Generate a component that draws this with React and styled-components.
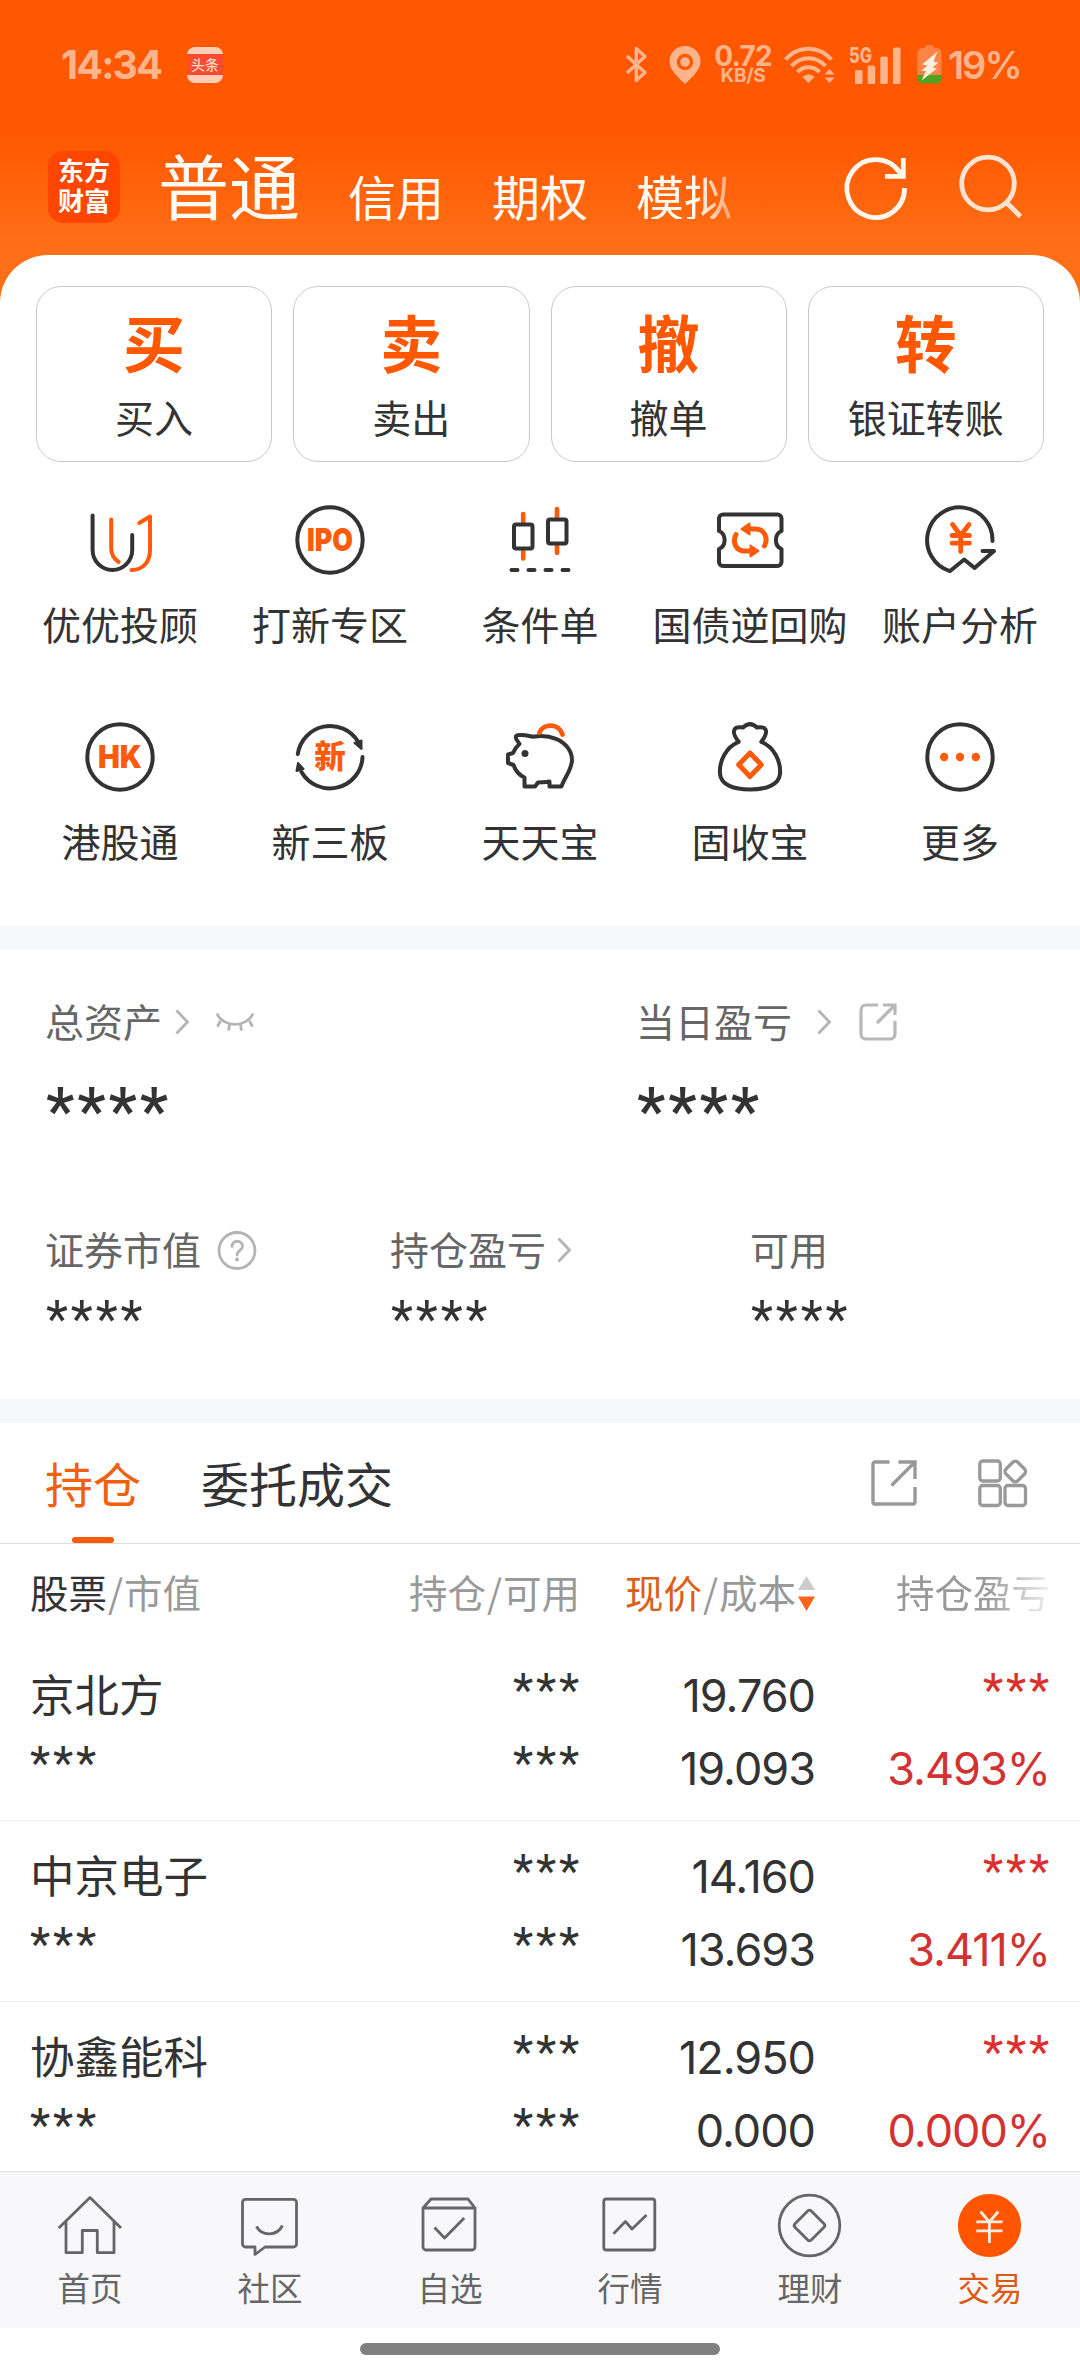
import React from 'react';
import styled, { createGlobalStyle } from 'styled-components';

const CJK = '"Noto Sans CJK SC", "Noto Sans", sans-serif';
const NUM = 'Inter, "Noto Sans CJK SC", sans-serif';
const STAR = 'Roboto, "Noto Sans CJK SC", sans-serif';
const ORANGE = '#ff5a0a';
const INK = '#333';

const GlobalStyle = createGlobalStyle`
  * { box-sizing: border-box; }
  body { margin: 0; background: #fff; }
  svg { display: block; flex: none; overflow: visible; }
`;

const Screen = styled.div`
  width: 1080px;
  height: 2376px;
  overflow: hidden;
  display: flex;
  flex-direction: column;
  font-family: ${CJK};
  color: ${INK};
  white-space: nowrap;
  background: linear-gradient(#ff5800 0, #ff5800 135px, #ff6f17 250px, #ff6f17 100%);
`;

/* ---------- status bar ---------- */

const StatusBar = styled.header`
  height: 129px;
  display: flex;
  align-items: center;
  padding: 0 60px 0 61px;
  color: #ffb48c;
  font-family: ${NUM};
  font-weight: 700;
`;

const Clock = styled.span`
  width: 126px;
  font-size: 39.5px;
  line-height: 44px;
  letter-spacing: -1.8px;
`;

const NewsBadge = styled.span`
  width: 36px;
  height: 36px;
  border-radius: 8px;
  background: linear-gradient(#ffcdb4 0 7px, #f94b30 7px 28px, #ffcdb4 28px);
  color: #ffd9c8;
  font: 500 14px/35px ${CJK};
  text-align: center;
`;

const StatusIcons = styled.div`
  margin-left: auto;
  display: flex;
  align-items: center;
`;

const StatusSlot = styled.div`
  width: ${(p) => p.$w}px;
  margin-left: ${(p) => p.$gap || 0}px;
`;

const Speed = styled.div`
  display: flex;
  flex-direction: column;
  align-items: center;
  font-size: 28px;
  line-height: 21px;
  letter-spacing: -0.8px;
  small {
    font-size: 19px;
    line-height: 17px;
    letter-spacing: -0.3px;
  }
`;

const BatteryText = styled.span`
  display: block;
  font-size: 38px;
  font-weight: 600;
  line-height: 44px;
  letter-spacing: -2px;
`;

/* ---------- account header ---------- */

const AccountBar = styled.div`
  height: 126px;
  display: flex;
  align-items: center;
  padding: 0 58px 10px 48px;
`;

const Logo = styled.div`
  width: 72px;
  height: 72px;
  border-radius: 15px;
  background: #ff4600;
  color: #fff;
  padding: 4px 0 0;
  text-align: center;
  font-size: 26px;
  font-weight: 700;
  line-height: 30px;
`;

const AccountTabs = styled.nav`
  display: flex;
  align-items: flex-end;
  gap: 48px;
  padding: 0 0 8px;
  margin-left: 38px;
  color: #fffaf3;
`;

const AccountTab = styled.span`
  font-size: ${(p) => (p.$active ? 71 : 48)}px;
  line-height: ${(p) => (p.$active ? 72 : 48)}px;
  ${(p) => p.$fade && 'mask-image: linear-gradient(90deg, #000 64%, rgba(0,0,0,.4));'}
`;

const HeaderActions = styled.div`
  margin-left: auto;
  padding-bottom: 2px;
  display: flex;
  gap: 50px;
`;

/* ---------- main sheet ---------- */

const Sheet = styled.main`
  flex: 1;
  min-height: 0;
  overflow: hidden;
  background: #fff;
  border-radius: 48px 48px 0 0;
`;

const TradeCards = styled.div`
  display: grid;
  grid-template-columns: repeat(4, 1fr);
  gap: 21px;
  padding: 31px 36px 0;
`;

const TradeCard = styled.div`
  height: 176px;
  border: 1px solid #c9c9c9;
  border-radius: 25px;
  display: flex;
  flex-direction: column;
  align-items: center;
  padding-top: 23px;
  gap: 24px;
  b {
    font-size: 62px;
    line-height: 62px;
    font-weight: 700;
    color: #ff5800;
  }
`;

const Label = styled.span`
  font-size: 39px;
  line-height: 40px;
  color: ${(p) => p.$color || INK};
`;

const ToolGrid = styled.div`
  display: grid;
  grid-template-columns: repeat(5, 1fr);
  row-gap: 78px;
  padding: 42px 15px 66px;
`;

const Tool = styled.div`
  display: flex;
  flex-direction: column;
  align-items: center;
  gap: 27px;
`;

const Band = styled.div`
  height: 24px;
  background: #f7f8fa;
`;

const Assets = styled.section`
  height: 449px;
  padding: 50px 0 0 45px;
`;

const AssetRow = styled.div`
  display: grid;
  grid-template-columns: ${(p) => p.$cols};
  margin-top: ${(p) => p.$top || 0}px;
`;

const AssetTitle = styled.div`
  height: 40px;
  display: flex;
  align-items: center;
  gap: ${(p) => p.$gap || 0}px;
  svg { margin-top: 4px; }
`;

const Stars = styled.span`
  display: block;
  font-family: ${STAR};
  font-size: ${(p) => p.$size}px;
  line-height: ${(p) => p.$line}px;
  letter-spacing: ${(p) => p.$spacing}px;
  font-weight: ${(p) => p.$weight || 400};
  margin: ${(p) => p.$margin || 0};
  color: ${(p) => p.$color || INK};
`;

/* ---------- positions ---------- */

const TabBar = styled.div`
  height: 121px;
  border-bottom: 1px solid #dcdcdc;
  display: flex;
  padding: 0 53px 0 45px;
`;

const Tab = styled.div`
  display: flex;
  flex-direction: column;
  align-items: center;
  padding-top: 35px;
  margin-right: 60px;
  font-size: 48px;
  line-height: 48px;
  color: ${(p) => (p.$active ? '#f0600f' : INK)};
  &::after {
    content: '';
    width: 42px;
    height: 6px;
    margin-top: 31px;
    border-radius: 3px;
    background: ${(p) => (p.$active ? '#f25a0c' : 'transparent')};
  }
`;

const TabTools = styled.div`
  margin-left: auto;
  display: flex;
  align-items: center;
  gap: 61px;
`;

const columns = `
  display: grid;
  grid-template-columns: 320px 230px 235px 235px;
  padding: 0 30px;
`;

const TableHead = styled.div`
  ${columns}
  height: 96px;
  align-items: center;
  padding-bottom: 2px;
  font-size: 38.5px;
  line-height: 40px;
  color: #999;
`;

const HeadCell = styled.div`
  display: flex;
  justify-content: ${(p) => (p.$left ? 'flex-start' : 'flex-end')};
  align-items: center;
  em {
    font-style: normal;
    color: ${(p) => (p.$accent ? '#dc5f16' : INK)};
  }
  i {
    font-style: normal;
    width: 17px;
    text-align: center;
  }
  svg { margin: 4px 0 0 2px; }
  ${(p) => p.$fade && 'mask-image: linear-gradient(90deg, #000 73%, rgba(0,0,0,.15));'}
`;

const Position = styled.div`
  ${columns}
  height: 181px;
  border-bottom: 1px solid #ebebeb;
`;

const Cell = styled.div`
  display: flex;
  flex-direction: column;
  align-items: ${(p) => (p.$left ? 'flex-start' : 'flex-end')};
  padding-top: 17px;
`;

const StockName = styled.span`
  font-size: 44.5px;
  line-height: 73px;
  height: 73px;
  margin-top: -1px;
  margin-bottom: 1px;
`;

const RowMask = styled(Stars)`
  height: 73px;
  padding-right: 0;
  margin: ${(p) => (p.$right ? '0 -2px 0 0' : '0')};
  line-height: 66px;
`;

const Figure = styled.span`
  font-family: ${NUM};
  font-size: 45px;
  height: 73px;
  line-height: 77px;
  letter-spacing: -1px;
  color: ${(p) => p.$color || INK};
`;

/* ---------- bottom navigation ---------- */

const BottomNav = styled.nav`
  height: 157px;
  border-top: 1px solid #e2e2e4;
  background: #f8f8fb;
  display: grid;
  grid-template-columns: repeat(6, 1fr);
`;

const NavItem = styled.div`
  display: flex;
  flex-direction: column;
  align-items: center;
  gap: 12px;
  padding-top: 22px;
  font-size: 32.5px;
  line-height: 34px;
  color: ${(p) => (p.$active ? '#dd5a14' : '#666')};
`;

const GestureArea = styled.footer`
  height: 48px;
  background: #fff;
  display: flex;
  justify-content: center;
  padding-top: 15px;
`;

const GestureBar = styled.div`
  width: 360px;
  height: 12px;
  border-radius: 6px;
  background: #808080;
`;

/* ---------- drawings ---------- */

const ToolSvg = ({ children }) => (
  <svg width="72" height="72" viewBox="0 0 72 72" fill="none" stroke={INK} strokeWidth="4" strokeLinecap="round" strokeLinejoin="round">
    {children}
  </svg>
);

const badgeText = { fill: ORANGE, stroke: 'none', textAnchor: 'middle', fontWeight: 900 };

const toolIcons = {
  advisor: (
    <ToolSvg>
      <path d="M8.6 11.5V46a19.8 20 0 0 0 39.6 0V31" />
      <path stroke={ORANGE} d="M27.2 15.5V44c0 6.500 3 11 7.500 14M55.300 19L66 12.500V46c0 12-7 20-18.500 20" />
    </ToolSvg>
  ),
  ipo: (
    <ToolSvg>
      <circle cx="36" cy="36" r="32.7" />
      <text x="36" y="47.300" fontFamily="Inter" fontSize="31" textLength="46" lengthAdjust="spacingAndGlyphs" {...badgeText}>IPO</text>
    </ToolSvg>
  ),
  candles: (
    <ToolSvg>
      <path stroke={ORANGE} d="M19.200 10V18M19.200 46V54.500M53 5V13M53 41.500V49" strokeWidth="4.600" />
      <rect x="10" y="20.500" width="18.500" height="24" rx="2" />
      <rect x="44" y="15.500" width="18.500" height="24" rx="2" />
      <path d="M7.500 66H13.500M24.500 66H30.500M41.500 66H47.500M58.500 66H64.500" />
    </ToolSvg>
  ),
  ticket: (
    <ToolSvg>
      <path d="M9 10.500H63.500a4 4 0 0 1 4 4V27c-7.500 3-7.500 15 0 18V58a4 4 0 0 1-4 4H9a4 4 0 0 1-4-4V45c7.500-3 7.500-15 0-18V14.500a4 4 0 0 1 4-4z" />
      <g stroke={ORANGE} strokeWidth="5">
        <path d="M22 30.500c-4 8 0 16.500 9 16.500H38M50.500 42c4-8 0-17-9-17H35" />
        <path fill={ORANGE} strokeWidth="2" d="M36.500 41.500L44.500 47L36.500 52.500zM35.500 19.500L27.500 25L35.500 30.500z" />
      </g>
    </ToolSvg>
  ),
  analysis: (
    <ToolSvg>
      <path d="M68.500 37A32.700 32.700 0 1 0 25.800 67.200L40.200 55.500L50.600 64L70 47H58.500" />
      <path stroke={ORANGE} strokeWidth="4.800" d="M28.500 20.500L36.700 31.500L45 20.500M36.700 32V47.500M28 31.500H45.500M28 39.200H45.500" />
    </ToolSvg>
  ),
  hk: (
    <ToolSvg>
      <circle cx="36" cy="36" r="32.7" />
      <text x="36" y="47.300" fontFamily="Inter" fontSize="31" textLength="44" lengthAdjust="spacingAndGlyphs" {...badgeText}>HK</text>
    </ToolSvg>
  ),
  otc: (
    <ToolSvg>
      <path d="M3.800 33A32.700 32.700 0 0 1 64 20.500M68.500 36A32.700 32.700 0 0 1 7.500 51" />
      <path fill={INK} strokeWidth="2" d="M67.500 19.500V28L60.500 22zM4 42L9.500 48L2.500 50z" />
      <text x="36" y="47.200" fontFamily="Noto Sans CJK SC" fontSize="31.500" {...badgeText}>新</text>
    </ToolSvg>
  ),
  piggy: (
    <ToolSvg>
      <path d="M15.500 23L12.500 18.500C11 15.500 12 14 15 14C21 13.500 25 15 29 15.800C37 14.500 45 15 52 17.800C62 22 68 30 68 39C67.500 50 60 57 57.500 65.500H45.500V60.500C41 61.500 38 61 34 61.500L31 65.500H20.500V56.500C15 54 11.500 50 9.500 44L4 42V33.500L9 32C10.500 28.500 12.500 25.500 15.500 23z" />
      <circle cx="21" cy="32.500" r="3.500" fill={INK} stroke="none" />
      <path stroke={ORANGE} strokeWidth="4.800" d="M35.500 11.500C39 2.500 55 1.500 58.500 13.500" />
    </ToolSvg>
  ),
  bag: (
    <ToolSvg>
      <path d="M24.700 20.800C21 16 18.500 12 20.500 8.500C22.500 5 26 6.500 29 6.500C33.500 2.200 38.500 2.200 43 6.500C46 6.500 49.500 5 51.500 8.500C53.500 12 51 16 47.300 20.800C60 26 67 40 66 53C65 64 52 68.500 36 68.500S7 64 6 53C5 40 12 26 24.700 20.800z" />
      <path stroke={ORANGE} strokeWidth="5" d="M36 32L47.300 43.800L36 55.600L24.700 43.800z" />
    </ToolSvg>
  ),
  more: (
    <ToolSvg>
      <circle cx="36" cy="36" r="32.7" />
      <g fill={ORANGE} stroke="none">
        <circle cx="20.200" cy="36" r="4.200" />
        <circle cx="36" cy="36" r="4.200" />
        <circle cx="51.800" cy="36" r="4.200" />
      </g>
    </ToolSvg>
  ),
};

const Chevron = () => (
  <svg width="15" height="26" viewBox="0 0 15 26" fill="none" stroke="#b4b4b4" strokeWidth="2.800">
    <path d="M1.500 1.500L12.500 13L1.500 24.500" />
  </svg>
);

const ClosedEye = () => (
  <svg width="40" height="20" viewBox="0 0 40 20" fill="none" stroke="#b4b4b4" strokeWidth="2.800">
    <path d="M2 1.500C8 16 32 16 38 1.500M5.500 9L2.500 14.500M14.500 13L13.500 18.500M25.500 13L26.500 18.500M34.500 9L37.500 14.500" />
  </svg>
);

const ShareSmall = () => (
  <svg width="38" height="38" viewBox="0 0 38 38" fill="none" stroke="#b8b8b8" strokeWidth="3.200">
    <path d="M19 2H7a5 5 0 0 0-5 5V31a5 5 0 0 0 5 5H31a5 5 0 0 0 5-5V18M24 2H36V12M36 2L18 20" />
  </svg>
);

const Help = () => (
  <svg width="39" height="39" viewBox="0 0 39 39" fill="none" stroke="#b4b4b4" strokeWidth="2.800" strokeLinecap="round">
    <circle cx="19" cy="19.500" r="18" />
    <path d="M14 15.500C14 8.500 24.500 8.500 24.500 15.500C24.500 19.500 19 19.500 19 24" />
    <circle cx="19" cy="28.500" r="2" fill="#b4b4b4" stroke="none" />
  </svg>
);

const ShareLarge = () => (
  <svg width="46" height="46" viewBox="0 0 46 46" fill="none" stroke="#999" strokeWidth="3.400">
    <path d="M18.500 2H4a2 2 0 0 0-2 2V42a2 2 0 0 0 2 2H42a2 2 0 0 0 2-2V27M27.500 2H44V19M44 2L20.500 25.500" />
  </svg>
);

const Widgets = () => (
  <svg width="49" height="48" viewBox="0 0 49 48" fill="none" stroke="#999" strokeWidth="3.300">
    <rect x="1.800" y="2" width="20.500" height="20" rx="3" />
    <rect x="1.800" y="26.500" width="20.500" height="20" rx="3" />
    <rect x="27" y="26.500" width="20.500" height="20" rx="3" />
    <rect x="29" y="4.200" width="16.600" height="16.600" rx="3.500" transform="rotate(45 37.300 12.500)" />
  </svg>
);

const Sorter = () => (
  <svg width="17" height="35" viewBox="0 0 17 35">
    <path fill="#ccc" d="M8.500 0L17 14H0z" />
    <path fill="#f8651a" d="M0 20.500H17L8.500 35z" />
  </svg>
);

const NavSvg = ({ children }) => (
  <svg width="64" height="64" viewBox="0 0 64 64" fill="none" stroke="#666" strokeWidth="2.800" strokeLinejoin="round">
    {children}
  </svg>
);

const navIcons = {
  home: (
    <NavSvg>
      <path d="M.8 34L32 3.500L63 34M8 27.500V58.700H24.300V36.500H39.300V58.700H56V27.500" />
    </NavSvg>
  ),
  community: (
    <NavSvg>
      <path d="M7.500 5.300H55.500a3 3 0 0 1 3 3V50a3 3 0 0 1-3 3H27L17 60.500V53H7.500a3 3 0 0 1-3-3V8.300a3 3 0 0 1 3-3zM18.500 32.500C24 42.500 39 42.500 44.500 31.500" />
    </NavSvg>
  ),
  watch: (
    <NavSvg>
      <path d="M5 14L13 5H50L57 14V53a3 3 0 0 1-3 3H8a3 3 0 0 1-3-3zH57M16.500 33.500L26.600 44L46.200 24" />
    </NavSvg>
  ),
  market: (
    <NavSvg>
      <rect x="5.800" y="5" width="51" height="51" rx="2.500" />
      <path d="M15.500 39.800L27.400 27.500L34 35L48.500 21" />
    </NavSvg>
  ),
  wealth: (
    <NavSvg>
      <circle cx="31.500" cy="31.500" r="30.300" />
      <rect x="20" y="20" width="23" height="23" rx="2.500" transform="rotate(45 31.500 31.500)" />
    </NavSvg>
  ),
  trade: (
    <NavSvg>
      <circle cx="31.500" cy="31.500" r="31.600" fill="#ff5500" stroke="none" />
      <path stroke="#ffece0" d="M22.500 17.500L31.400 28L40.300 17.500M31.400 28V49M18.300 27.800H44.500M18.300 36.800H44.500" />
    </NavSvg>
  ),
};

/* ---------- data ---------- */

const tradeCards = [
  ['买', '买入'],
  ['卖', '卖出'],
  ['撤', '撤单'],
  ['转', '银证转账'],
];

const tools = [
  ['advisor', '优优投顾'],
  ['ipo', '打新专区'],
  ['candles', '条件单'],
  ['ticket', '国债逆回购'],
  ['analysis', '账户分析'],
  ['hk', '港股通'],
  ['otc', '新三板'],
  ['piggy', '天天宝'],
  ['bag', '固收宝'],
  ['more', '更多'],
];

const positions = [
  ['京北方', '19.760', '19.093', '3.493%'],
  ['中京电子', '14.160', '13.693', '3.411%'],
  ['协鑫能科', '12.950', '0.000', '0.000%'],
];

const navItems = [
  ['home', '首页'],
  ['community', '社区'],
  ['watch', '自选'],
  ['market', '行情'],
  ['wealth', '理财'],
  ['trade', '交易'],
];

const BigStars = () => <Stars $size={64} $line={60} $spacing={2.9} $weight={500} $margin="42px 0 0 1px">****</Stars>;
const MidStars = () => <Stars $size={51} $line={40} $spacing={2.9} $margin="32px 0 0 1px">****</Stars>;
const RowStars = ({ color, right }) => (
  <RowMask $size={47} $spacing={2.8} $color={color} $right={right}>***</RowMask>
);

export default function App() {
  return (
    <Screen>
      <GlobalStyle />
      <StatusBar>
        <Clock>14:34</Clock>
        <NewsBadge>头条</NewsBadge>
        <StatusIcons>
          <StatusSlot $w={21}>
            <svg width="21" height="37" viewBox="0 0 21 37" fill="none" stroke="currentColor" strokeWidth="3.400" strokeLinejoin="round">
              <path d="M1 10L19 26.500L10.300 34.500V2.500L19 10.500L1 27" />
            </svg>
          </StatusSlot>
          <StatusSlot $w={32} $gap={22}>
            <svg width="32" height="38" viewBox="0 0 32 38" fill="currentColor" fillRule="evenodd">
              <path d="M16 0A15.500 15.500 0 0 1 31.500 15.500C31.500 24.500 22 32 16 38C10 32 .5 24.500 .5 15.500A15.500 15.500 0 0 1 16 0zM16 7.800a8.200 8.200 0 1 0 0 16.400a8.200 8.200 0 1 0 0-16.400z" />
              <circle cx="16" cy="16" r="4.800" />
            </svg>
          </StatusSlot>
          <StatusSlot $w={56} $gap={14}>
            <Speed>
              0.72
              <small>KB/S</small>
            </Speed>
          </StatusSlot>
          <StatusSlot $w={50} $gap={13}>
            <svg width="50" height="37" viewBox="0 0 50 37" fill="none" stroke="currentColor" strokeWidth="4">
              <path d="M1.500 13.500C14 -1 34.500 -1 47.500 13.500M7.500 20C17 9.500 32 9.500 41.500 20M13.500 26C20 19.500 29 19.500 35.500 26" />
              <path fill="currentColor" stroke="none" d="M18.500 31C22 27.500 27 27.500 30.500 31L24.500 37zM40.500 28.500L45.500 23L50.500 28.500zM40.500 31.500H50.500L45.500 37z" />
            </svg>
          </StatusSlot>
          <StatusSlot $w={52} $gap={15}>
            <svg width="52" height="38" viewBox="0 0 52 38" fill="currentColor">
              <text x="0" y="16.500" fontFamily="Inter" fontWeight="800" fontSize="22" textLength="23" lengthAdjust="spacingAndGlyphs">5G</text>
              <rect x="6" y="24" width="7.500" height="14" rx="1.500" />
              <rect x="18.700" y="19.500" width="7.500" height="18.500" rx="1.500" />
              <rect x="31.300" y="10.500" width="7.500" height="27.500" rx="1.500" />
              <rect x="44" y="1.500" width="7.500" height="36.500" rx="1.500" />
            </svg>
          </StatusSlot>
          <StatusSlot $w={25} $gap={16}>
            <svg width="25" height="39" viewBox="0 0 25 39">
              <path fill="#ff8347" d="M8 3a3 3 0 0 1 3-3h3a3 3 0 0 1 3 3h2.500a5 5 0 0 1 5 5V30H.5V8a5 5 0 0 1 5-5z" />
              <path fill="#4fa31f" d="M.5 30H24.500V33.500a5 5 0 0 1-5 5h-14a5 5 0 0 1-5-5z" />
              <path fill="#fff0e2" d="M20.500 6.500L5 19.500L10.500 20.500L4.500 25.500L9 26L4.500 35.500L20 23.500L15.500 22.500L21.500 17.500L16.500 16.500z" />
            </svg>
          </StatusSlot>
          <StatusSlot $w={72} $gap={6}>
            <BatteryText>19%</BatteryText>
          </StatusSlot>
        </StatusIcons>
      </StatusBar>

      <AccountBar>
        <Logo>东方<br />财富</Logo>
        <AccountTabs>
          <AccountTab $active>普通</AccountTab>
          <AccountTab>信用</AccountTab>
          <AccountTab>期权</AccountTab>
          <AccountTab $fade>模拟</AccountTab>
        </AccountTabs>
        <HeaderActions>
          <svg width="64" height="64" viewBox="0 0 64 64" fill="none" stroke="#fff6ec" strokeWidth="4.800">
            <path d="M60.500 34A28.800 29 0 1 1 55 17.500L59.500 22M59.300 4V22.300H41" />
          </svg>
          <svg width="64" height="64" viewBox="0 0 64 64" fill="none" stroke="#ffe3d0" strokeWidth="4.800">
            <circle cx="30" cy="29.500" r="26.300" />
            <path d="M48.500 48.500L62.500 62.500" strokeWidth="5" />
          </svg>
        </HeaderActions>
      </AccountBar>

      <Sheet>
        <TradeCards>
          {tradeCards.map(([mark, name]) => (
            <TradeCard key={name}>
              <b>{mark}</b>
              <Label>{name}</Label>
            </TradeCard>
          ))}
        </TradeCards>
        <ToolGrid>
          {tools.map(([icon, name]) => (
            <Tool key={name}>
              {toolIcons[icon]}
              <Label>{name}</Label>
            </Tool>
          ))}
        </ToolGrid>
        <Band />
        <Assets>
          <AssetRow $cols="591px 1fr">
            <div>
              <AssetTitle $gap={12.5}>
                <Label $color="#666">总资产</Label>
                <Chevron />
                <span />
                <ClosedEye />
              </AssetTitle>
              <BigStars />
            </div>
            <div>
              <AssetTitle $gap={25}>
                <Label $color="#666">当日盈亏</Label>
                <Chevron />
                <span style={{ marginLeft: -23 }} />
                <ShareSmall />
              </AssetTitle>
              <BigStars />
            </div>
          </AssetRow>
          <AssetRow $cols="345px 360px 1fr" $top={86}>
            <div>
              <AssetTitle $gap={17}>
                <Label $color="#666">证券市值</Label>
                <Help />
              </AssetTitle>
              <MidStars />
            </div>
            <div>
              <AssetTitle $gap={11}>
                <Label $color="#666">持仓盈亏</Label>
                <Chevron />
              </AssetTitle>
              <MidStars />
            </div>
            <div>
              <AssetTitle>
                <Label $color="#666">可用</Label>
              </AssetTitle>
              <MidStars />
            </div>
          </AssetRow>
        </Assets>
        <Band />
        <TabBar>
          <Tab $active>持仓</Tab>
          <Tab>委托成交</Tab>
          <TabTools>
            <ShareLarge />
            <Widgets />
          </TabTools>
        </TabBar>
        <TableHead>
          <HeadCell $left><em>股票</em><i>/</i>市值</HeadCell>
          <HeadCell>持仓<i>/</i>可用</HeadCell>
          <HeadCell $accent><em>现价</em><i>/</i>成本<Sorter /></HeadCell>
          <HeadCell $fade>持仓盈亏</HeadCell>
        </TableHead>
        {positions.map(([name, price, cost, change]) => (
          <Position key={name}>
            <Cell $left>
              <StockName>{name}</StockName>
              <RowStars />
            </Cell>
            <Cell>
              <RowStars right />
              <RowStars right />
            </Cell>
            <Cell>
              <Figure>{price}</Figure>
              <Figure>{cost}</Figure>
            </Cell>
            <Cell>
              <RowStars right color="#d93030" />
              <Figure $color="#d23232">{change}</Figure>
            </Cell>
          </Position>
        ))}
      </Sheet>

      <BottomNav>
        {navItems.map(([icon, name]) => (
          <NavItem key={name} $active={icon === 'trade'}>
            {navIcons[icon]}
            {name}
          </NavItem>
        ))}
      </BottomNav>
      <GestureArea>
        <GestureBar />
      </GestureArea>
    </Screen>
  );
}
